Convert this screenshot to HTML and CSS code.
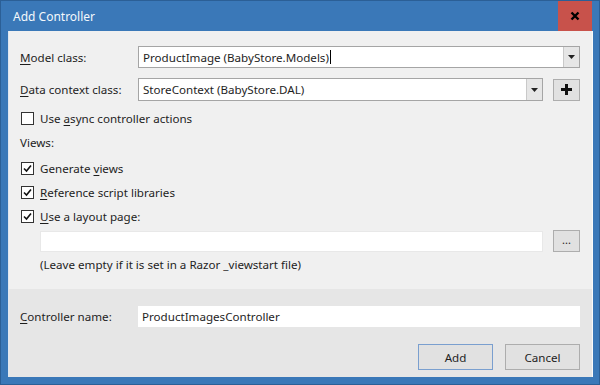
FILE: index.html
```html
<!DOCTYPE html>
<html>
<head>
<meta charset="utf-8">
<link rel="stylesheet" href="styles.css">
</head>
<body>
<div class="window">
  <div class="titlebar">
    <span class="title">Add Controller</span>
    <span class="close"><svg class="xicon" width="10" height="10" viewBox="0 0 10 10"><path d="M1.5 1.5L8.5 8.5M8.5 1.5L1.5 8.5"/></svg></span>
  </div>
  <div class="content">
    <div class="main">
      <div class="row r1">
        <span class="label"><u>M</u>odel class:</span>
        <div class="combo">
          <span class="val">ProductImage (BabyStore.Models)<span class="caret"></span></span>
          <span class="drop"><svg width="7" height="4" viewBox="0 0 7 4"><path d="M0 0H7L3.5 4Z" fill="#222"/></svg></span>
        </div>
      </div>
      <div class="row r2">
        <span class="label"><u>D</u>ata context class:</span>
        <div class="combo">
          <span class="val">StoreContext (BabyStore.DAL)</span>
          <span class="drop"><svg width="7" height="4" viewBox="0 0 7 4"><path d="M0 0H7L3.5 4Z" fill="#222"/></svg></span>
        </div>
        <span class="btn small plus"><svg width="11" height="11" viewBox="0 0 11 11"><path d="M4 0H7V4H11V7H7V11H4V7H0V4H4Z" fill="#111"/></svg></span>
      </div>
      <label class="check r3"><span class="box"></span><span class="txt">Use <u>a</u>sync controller actions</span></label>
      <div class="section">Views:</div>
      <label class="check r4"><span class="box on"><svg width="9" height="9" viewBox="0 0 9 9"><path d="M1 4.5L3.5 7L8 1.5" fill="none" stroke="#111" stroke-width="1.6"/></svg></span><span class="txt">Generate <u>v</u>iews</span></label>
      <label class="check r5"><span class="box on"><svg width="9" height="9" viewBox="0 0 9 9"><path d="M1 4.5L3.5 7L8 1.5" fill="none" stroke="#111" stroke-width="1.6"/></svg></span><span class="txt"><u>R</u>eference script libraries</span></label>
      <label class="check r6"><span class="box on"><svg width="9" height="9" viewBox="0 0 9 9"><path d="M1 4.5L3.5 7L8 1.5" fill="none" stroke="#111" stroke-width="1.6"/></svg></span><span class="txt"><u>U</u>se a layout page:</span></label>
      <div class="row r7">
        <div class="input layout"></div>
        <span class="btn small dots">...</span>
      </div>
      <div class="hint">(Leave empty if it is set in a Razor _viewstart file)</div>
    </div>
    <div class="footer">
      <div class="row r8">
        <span class="label"><u>C</u>ontroller name:</span>
        <div class="input name">ProductImagesController</div>
      </div>
      <div class="buttons">
        <span class="btn big default">Add</span>
        <span class="btn big">Cancel</span>
      </div>
    </div>
  </div>
</div>
</body>
</html>
```
FILE: styles.css
```css
* { box-sizing: border-box; }
html, body { margin: 0; padding: 0; }
body {
  width: 600px;
  height: 385px;
  font-family: "Noto Sans", "Open Sans", sans-serif;
  font-size: 11.6px;
  color: #1e1e1e;
  overflow: hidden;
}
.window {
  width: 600px;
  height: 385px;
  background: #3a78b8;
  border: 1px solid #2b5f96;
  padding: 0 6px 7px 7px;
  display: flex;
  flex-direction: column;
}
.titlebar {
  height: 30px;
  display: flex;
  align-items: center;
  justify-content: space-between;
  flex-shrink: 0;
}
.title {
  color: #f4f8fc;
  font-size: 12px;
  padding-left: 5px;
  margin-top: 1px;
}
.close {
  width: 34px;
  height: 30px;
  margin-top: -1px;
  margin-right: 1px;
  background: #c8524b;
  display: flex;
  align-items: center;
  justify-content: center;
}
.xicon path {
  stroke: #000000;
  stroke-width: 2.4;
  fill: none;
}
.content {
  flex: 1;
  display: flex;
  flex-direction: column;
  background: #f0f0f0;
  border-left: 1px solid #dfe7f0;
  border-right: 1px solid #fafafa;
}
.main {
  padding: 15px 12px 0 11px;
  height: 258px;
  flex-shrink: 0;
}
.row {
  display: flex;
  align-items: center;
}
.label {
  width: 118px;
  flex-shrink: 0;
}
.combo {
  flex: 1;
  height: 22px;
  background: #fff;
  border: 1px solid #a5a5a5;
  display: flex;
  align-items: stretch;
}
.combo .val {
  flex: 1;
  padding-left: 4px;
  display: flex;
  align-items: center;
}
.caret {
  display: inline-block;
  width: 1px;
  height: 14px;
  background: #000;
  margin-left: 1px;
}
.drop {
  width: 16px;
  background: #e6e6e6;
  border-left: 1px solid #c9c9c9;
  display: flex;
  align-items: center;
  justify-content: center;
}
.r2 { margin-top: 10px; }
.r2 .combo { height: 23px; }
.btn {
  display: flex;
  align-items: center;
  justify-content: center;
  background: #e1e1e1;
  border: 1px solid #adadad;
}
.small {
  width: 27px;
  height: 22px;
  margin-left: 10px;
  flex-shrink: 0;
}
.dots { font-size: 11px; line-height: 1; padding-bottom: 3px; }
.check {
  display: flex;
  align-items: center;
  height: 16px;
  margin-left: 1px;
}
.box {
  width: 13px;
  height: 13px;
  border: 1px solid #333;
  background: #fff;
  margin-right: 6px;
  display: flex;
  align-items: center;
  justify-content: center;
  flex-shrink: 0;
}
.r3 { margin-top: 9px; }
.section { margin-top: 9px; height: 16px; line-height: 16px; }
.r4 { margin-top: 9px; }
.r5 { margin-top: 8px; }
.r6 { margin-top: 8px; }
.r7 { margin-top: 6px; padding-left: 20px; }
.input {
  background: #fff;
  height: 21px;
}
.layout {
  flex: 1;
  border: 1px solid #e8e8e8;
}
.hint { margin-top: 5px; padding-left: 20px; height: 16px; line-height: 16px; }
.footer {
  flex: 1;
  background: #e6e6e6;
  padding: 17px 12px 0 11px;
}
.name {
  flex: 1;
  padding-left: 4px;
  display: flex;
  align-items: center;
}
.buttons {
  display: flex;
  justify-content: flex-end;
  gap: 12px;
  margin-top: 17px;
}
.big {
  width: 75px;
  height: 26px;
}
.default { border-color: #7a9fcf; }
u { text-decoration: underline; text-underline-offset: 2px; }
```
